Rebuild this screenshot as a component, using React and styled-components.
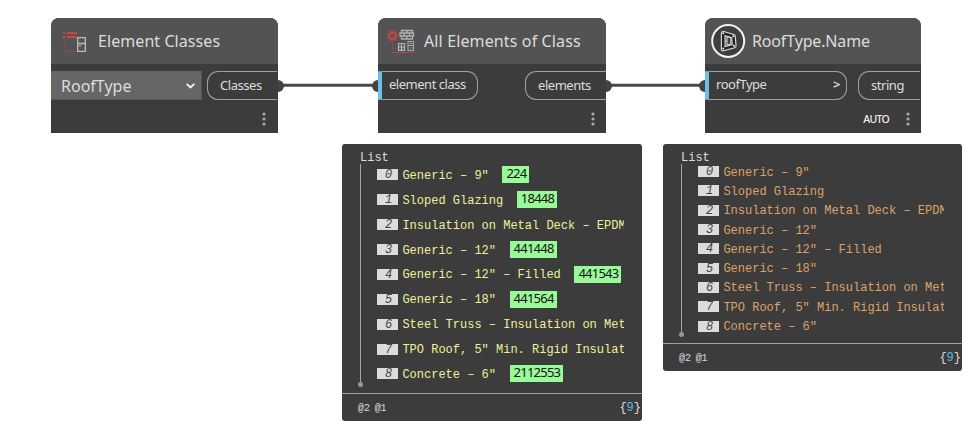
import React from "react";
import styled, { createGlobalStyle } from "styled-components";

const Global = createGlobalStyle`
  body { margin: 0; background: #fff; overflow: hidden; }
  *, *::before, *::after { box-sizing: border-box; }
`;

const Canvas = styled.main`
  position: relative;
  width: 974px;
  height: 432px;
  overflow: hidden;
  font-family: "Noto Sans", "Open Sans", sans-serif;
  color: #dcdcdc;
`;

const Wires = styled.svg`
  position: absolute;
  inset: 0;
`;

const NodeCard = styled.section`
  position: absolute;
  top: 18px;
  left: ${(p) => p.$x}px;
  width: ${(p) => p.$w}px;
  height: 115px;
  display: flex;
  flex-direction: column;
  background: #3c3c3c;
  border-radius: 8px 8px 0 0;
  overflow: hidden;
`;

const Header = styled.header`
  height: 46px;
  flex: none;
  display: flex;
  align-items: center;
  background: #535353;
`;

const IconSlot = styled.div`
  width: ${(p) => p.$w}px;
  height: 46px;
  flex: none;
  svg { display: block; }
`;

const Title = styled.h2`
  margin: 0;
  font-size: 16px;
  font-weight: 400;
  line-height: 46px;
  white-space: nowrap;
  letter-spacing: ${(p) => p.$ls || 0}px;
`;

const Ports = styled.div`
  display: flex;
  justify-content: space-between;
  height: 29px;
  margin-top: 7px;
`;

const Dropdown = styled.div`
  width: 151px;
  display: flex;
  align-items: center;
  justify-content: space-between;
  padding: 1px 6px 0 10px;
  background: #666;
  border-right: 1px solid #565656;
  border-bottom: 1px solid #565656;
  font-size: 16px;
  line-height: 28px;
`;

const InPort = styled.div`
  width: ${(p) => p.$w}px;
  display: flex;
  justify-content: space-between;
  padding: 0 6px 0 7px;
  border: 1px solid #a0a0a0;
  border-left: 4px solid #6ac0e7;
  border-radius: 0 11px 11px 0;
  font-size: 13px;
  line-height: 25px;
  white-space: nowrap;
  letter-spacing: -0.48px;
`;

const Chevron = styled.span`
  font-weight: 600;
`;

const OutPort = styled.div`
  width: ${(p) => p.$w}px;
  margin-right: ${(p) => p.$edge || 0}px;
  padding-left: 12px;
  border: 1px solid #a0a0a0;
  border-right: 0;
  border-radius: 11px 0 0 11px;
  font-size: 13px;
  line-height: 27px;
  white-space: nowrap;
  letter-spacing: -0.45px;
`;

const Foot = styled.footer`
  flex: 1;
  display: flex;
  align-items: center;
  justify-content: flex-end;
  gap: 17px;
  padding: 5px ${(p) => p.$r}px 0 0;
  font-size: 10.5px;
  font-weight: 500;
  color: #eee;
`;

const Mode = styled.span`
  letter-spacing: -0.7px;
  line-height: 14px;
`;

const Dots = styled.svg`
  display: block;
  flex: none;
`;

const Panel = styled.section`
  position: absolute;
  top: 144px;
  left: ${(p) => p.$x}px;
  width: ${(p) => p.$w}px;
  height: ${(p) => p.$h}px;
  display: flex;
  flex-direction: column;
  background: #3c3c3c;
  border-radius: 3px;
  overflow: hidden;
  font-family: "Liberation Mono", monospace;
  font-size: 12px;
`;

const ListTitle = styled.div`
  height: 20px;
  flex: none;
  padding: 7px 0 0 18px;
  line-height: 14px;
`;

const Tree = styled.div`
  flex: 1;
  min-height: 0;
  display: flex;
`;

const Rail = styled.div`
  width: 5px;
  height: ${(p) => p.$h}px;
  margin-left: ${(p) => p.$inset}px;
  flex: none;
  display: flex;
  flex-direction: column;
  align-items: center;
  &::before { content: ""; width: 1px; flex: 1; background: #a5a5a5; }
  &::after { content: ""; width: 5px; height: 5px; border-radius: 50%; background: #999; }
`;

const Rows = styled.ol`
  list-style: none;
  margin: ${(p) => p.$top}px 0 0 14px;
  padding: 0;
  width: ${(p) => p.$w}px;
`;

const Row = styled.li`
  height: ${(p) => p.$pitch}px;
  display: flex;
  align-items: center;
  overflow: hidden;
  white-space: pre;
  color: ${(p) => p.$color};
`;

const Index = styled.span`
  width: 21px;
  height: 11px;
  flex: none;
  margin-right: 4.4px;
  padding-left: 8px;
  background: #dcdcdc;
  color: #444;
  font-style: italic;
  line-height: 12px;
`;

const Value = styled.span`
  line-height: 14px;
  padding-top: 2px;
`;

const Tag = styled.span`
  height: 17px;
  margin-left: 13.6px;
  padding: 0 3px 0 4px;
  background: #98fb98;
  color: #111;
  font: 13px/15px "Noto Sans", sans-serif;
  letter-spacing: -0.77px;
`;

const PanelFoot = styled.footer`
  height: 28px;
  flex: none;
  display: flex;
  align-items: center;
  justify-content: space-between;
  padding: 1px 1px 0 16px;
  border-top: 1px solid #a0a0a0;
`;

const Levels = styled.span`
  font-size: 10px;
  letter-spacing: -0.1px;
  word-spacing: -1px;
`;

const Count = styled.span`
  b { font-weight: 400; color: #5db8e8; }
`;

const Kebab = () => (
  <Dots width="4" height="14" fill="#aaa">
    <circle cx="2" cy="2" r="1.6" /><circle cx="2" cy="7" r="1.6" /><circle cx="2" cy="12" r="1.6" />
  </Dots>
);

const ClassesIcon = () => (
  <svg width="47" height="46" fill="none">
    <path d="M12 15H14M16 15H26M12 19H14M16 19H26" stroke="#d0453f" strokeWidth="2" />
    <path d="M14.5 21V34" stroke="#b84540" strokeDasharray="1.5 1" />
    <path d="M15 33.5H26" stroke="#9b4845" />
    <path d="M26.7 19.7H34.3V33.3H26.7ZM26.7 25.5H34.3" stroke="#bebebe" strokeWidth="1.3" />
    <path d="M29.5 25V28H27" stroke="#8d8d8d" strokeWidth="1.4" />
  </svg>
);

const ElementsIcon = () => (
  <svg width="46" height="46" fill="none">
    <circle cx="14.4" cy="17.7" r="3.1" stroke="#d0453f" strokeWidth="1.6" />
    <circle cx="14.4" cy="17.7" r="4.6" stroke="#d0453f" strokeWidth="1.8" strokeDasharray="1.8 1.81" />
    <path d="M14.5 23V33" stroke="#b84540" strokeDasharray="1.5 1" />
    <path d="M14 34.5H36.5" stroke="#ad4844" />
    <path d="M23.5 12.5H34.5V15H23.5ZM22 15H35.5V18H22ZM23.5 18H34.5V21H23.5ZM29 12.5V15M26 15V18M31.5 15V18M29 18V21" stroke="#b0b0b0" strokeWidth="1.3" />
    <path d="M20.5 25.5H26.5V32.3H20.5ZM23.5 25.5V32.3M20.5 29H26.5" stroke="#b5b5b5" strokeWidth="1.2" />
    <path d="M30 23.5H35.5V32.5H30ZM30 27.5H35.5M31.5 25.5H34M32 30H33.5" stroke="#aaa" strokeWidth="1.1" />
  </svg>
);

const DynamoIcon = () => (
  <svg width="47" height="46" fill="none">
    <circle cx="23.2" cy="23" r="16" fill="#3f3f3f" stroke="#f2f2f2" strokeWidth="2" />
    <path d="M18.2 15.3L28.4 18.2L29.2 28L18.2 31Z" stroke="#e0e0e0" strokeWidth="4.8" strokeLinejoin="round" />
    <path d="M18.2 15.3L28.4 18.2L29.2 28L18.2 31Z" stroke="#242424" strokeWidth="2.6" strokeLinejoin="round" />
    <path d="M22 18.8L25.8 19.6V26L22 27ZM20 23H22" stroke="#d0d0d0" strokeWidth="1.1" />
    <g fill="#eee"><circle cx="18.3" cy="15.2" r="1" /><circle cx="18.3" cy="30.6" r="1" /><circle cx="28.3" cy="18.2" r="1" /><circle cx="29" cy="27.8" r="1" /></g>
  </svg>
);

const roofs = [
  ['Generic – 9"', 224],
  ["Sloped Glazing", 18448],
  ["Insulation on Metal Deck – EPDM"],
  ['Generic – 12"', 441448],
  ['Generic – 12" – Filled', 441543],
  ['Generic – 18"', 441564],
  ["Steel Truss – Insulation on Met"],
  ['TPO Roof, 5" Min. Rigid Insulat'],
  ['Concrete – 6"', 2112553],
];

const Preview = ({ x, w, h, inset, rail, top, rows, pitch, color, ids }) => (
  <Panel $x={x} $w={w} $h={h}>
    <ListTitle>List</ListTitle>
    <Tree>
      <Rail $h={rail} $inset={inset} />
      <Rows $top={top} $w={rows}>
        {roofs.map(([name, id], i) => (
          <Row key={name} $pitch={pitch} $color={color}>
            <Index>{i}</Index>
            <Value>{name}</Value>
            {ids && id && <Tag>{id}</Tag>}
          </Row>
        ))}
      </Rows>
    </Tree>
    <PanelFoot>
      <Levels>@2 @1</Levels>
      <Count>{"{"}<b>9</b>{"}"}</Count>
    </PanelFoot>
  </Panel>
);

export default function App() {
  return (
    <Canvas>
      <Global />
      <Wires width="974" height="432" fill="#434343">
        <path d="M278 85.2H378M606 85.2H705" stroke="#4a4a4a" strokeWidth="3" />
        <circle cx="278" cy="86" r="6" /><circle cx="378" cy="86" r="6" />
        <circle cx="606" cy="86" r="6" /><circle cx="705" cy="86" r="6" />
      </Wires>

      <NodeCard $x={51} $w={227}>
        <Header>
          <IconSlot $w={47}><ClassesIcon /></IconSlot>
          <Title $ls={0.07}>Element Classes</Title>
        </Header>
        <Ports>
          <Dropdown>
            RoofType
            <svg width="9" height="6" fill="none" stroke="#f5f5f5" strokeWidth="1.8"><path d="M.7 .8L4.5 4.5L8.3 .8" /></svg>
          </Dropdown>
          <OutPort $w={70} $edge={1}>Classes</OutPort>
        </Ports>
        <Foot $r={12}><Kebab /></Foot>
      </NodeCard>

      <NodeCard $x={378} $w={228}>
        <Header>
          <IconSlot $w={46}><ElementsIcon /></IconSlot>
          <Title $ls={0.13}>All Elements of Class</Title>
        </Header>
        <Ports>
          <InPort $w={100}>element class</InPort>
          <OutPort $w={81}>elements</OutPort>
        </Ports>
        <Foot $r={11}><Kebab /></Foot>
      </NodeCard>

      <NodeCard $x={705} $w={216}>
        <Header>
          <IconSlot $w={47}><DynamoIcon /></IconSlot>
          <Title $ls={-0.15}>RoofType.Name</Title>
        </Header>
        <Ports>
          <InPort $w={142}><span>roofType</span><Chevron>&gt;</Chevron></InPort>
          <OutPort $w={62} $edge={1}>string</OutPort>
        </Ports>
        <Foot $r={11}><Mode>AUTO</Mode><Kebab /></Foot>
      </NodeCard>

      <Preview x={342} w={300} h={277} inset={16} rail={223} top={-1.5} rows={247} pitch={24.88} color="#f0f09a" ids />
      <Preview x={663} w={299} h={227} inset={16} rail={173} top={-2} rows={246} pitch={19.3} color="#dda26a" />
    </Canvas>
  );
}
